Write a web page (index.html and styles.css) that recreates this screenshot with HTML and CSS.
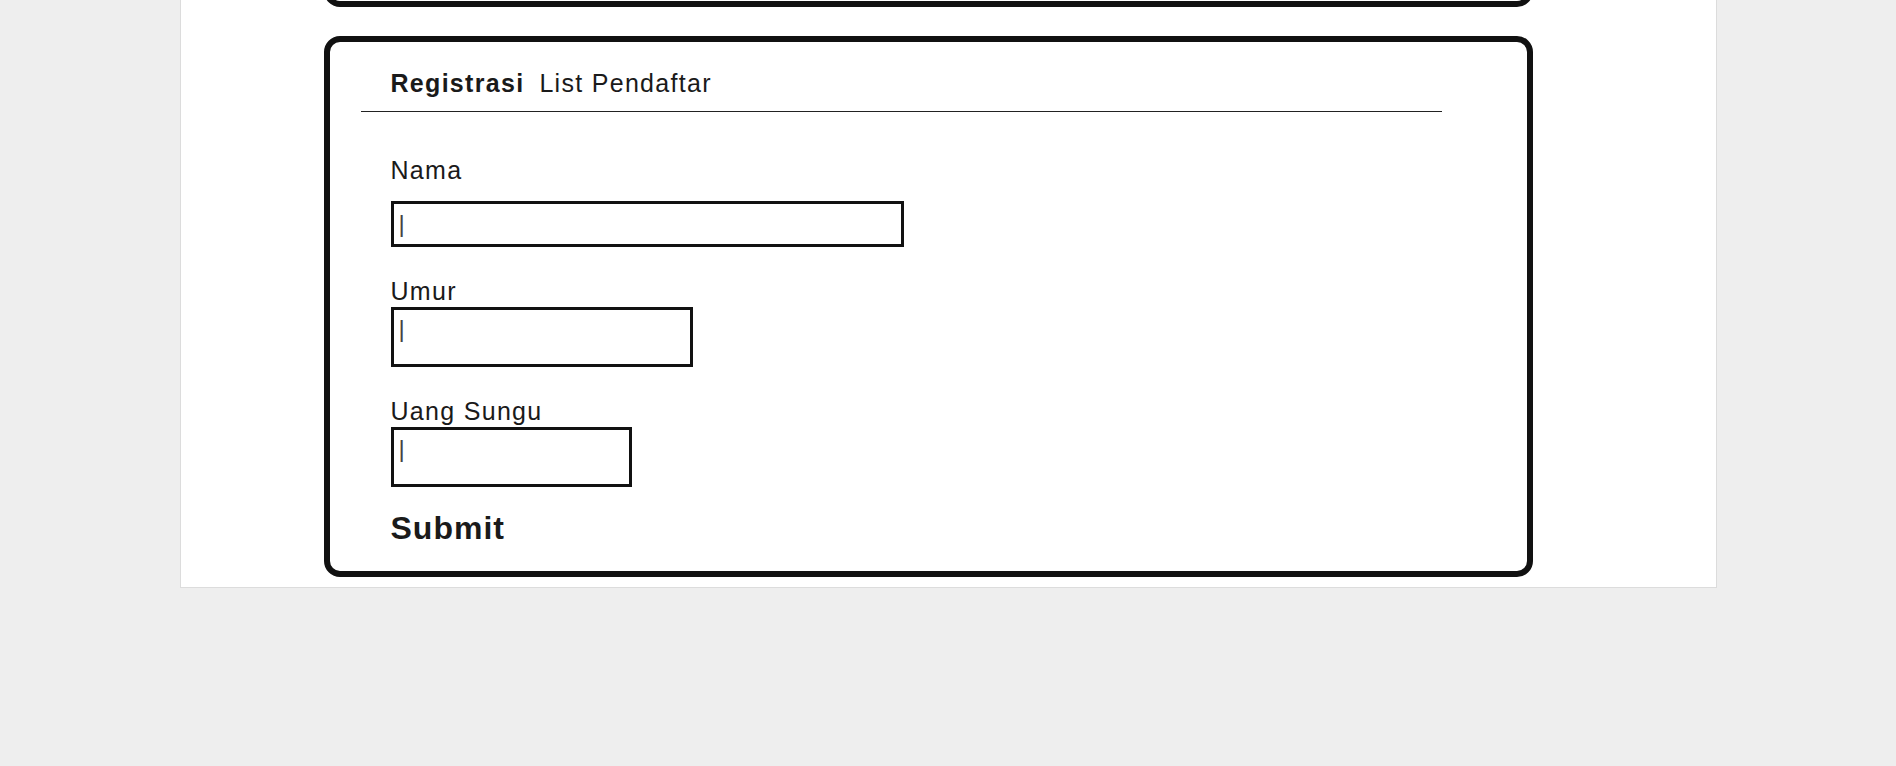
FILE: index.html
```html
<!DOCTYPE html>
<html lang="id">
<head>
<meta charset="utf-8">
<title>Registrasi</title>
<link rel="stylesheet" href="styles.css">
</head>
<body>
<div class="panel">
  <div class="card card-prev"></div>
  <div class="card">
    <div class="tabs">
      <span class="tab tab-active">Registrasi</span>
      <span class="tab">List Pendaftar</span>
    </div>
    <form class="form">
      <label class="label label-first" for="nama">Nama</label>
      <input class="field field-nama" id="nama" type="text" placeholder="|">
      <label class="label" for="umur">Umur</label>
      <input class="field field-umur" id="umur" type="text" placeholder="|">
      <label class="label" for="uang">Uang Sungu</label>
      <input class="field field-uang" id="uang" type="text" placeholder="|">
      <button class="submit" type="button">Submit</button>
    </form>
  </div>
</div>
</body>
</html>
```

FILE: styles.css
```css
* { box-sizing: border-box; }

html, body {
  margin: 0;
  padding: 0;
}

body {
  background: #eeeeee;
  font-family: "Liberation Sans", Arial, sans-serif;
  color: #1a1a1a;
  height: 766px;
  overflow: hidden;
}

.panel {
  width: 1537px;
  margin: -200px auto 0;
  background: #ffffff;
  border: 1px solid #dcdcdc;
  padding-bottom: 10px;
}

.card {
  width: 1209px;
  margin: 29px 0 0 143px;
  border: 6px solid #111111;
  border-radius: 16px;
  background: #ffffff;
}

.card-prev {
  height: 206px;
  margin-top: 0;
}

.tabs {
  display: flex;
  gap: 15px;
  margin-left: 31px;
  width: 1081px;
  padding: 27px 0 14px 30px;
  border-bottom: 1px solid #222222;
  font-size: 25px;
  line-height: 28px;
  letter-spacing: 1.3px;
}

.tab-active {
  font-weight: bold;
}

.form {
  padding: 44px 0 25px 61px;
}

.label {
  display: block;
  font-size: 25px;
  line-height: 28px;
  letter-spacing: 1.3px;
  margin-top: 30px;
}

.label-first {
  margin-top: 0;
  margin-bottom: 17px;
}

.field {
  display: block;
  margin: 2px 0 0;
  border: 3px solid #111111;
  border-radius: 0;
  background: #ffffff;
  font-family: "Liberation Sans", Arial, sans-serif;
  font-size: 24px;
  line-height: 28px;
  color: #1a1a1a;
  padding: 5px 5px 21px;
  outline: none;
}

.field::placeholder {
  color: #444444;
  opacity: 1;
}

.field-nama {
  width: 513px;
  height: 46px;
  margin-top: 0;
  padding: 6px 5px;
}

.field-umur {
  width: 302px;
  height: 60px;
}

.field-uang {
  width: 241px;
  height: 60px;
}

.submit {
  display: block;
  margin: 23px 0 0;
  padding: 0;
  border: none;
  background: none;
  font-family: "Liberation Sans", Arial, sans-serif;
  font-size: 32px;
  line-height: 36px;
  font-weight: bold;
  letter-spacing: 1px;
  color: #1a1a1a;
  cursor: pointer;
}
```
